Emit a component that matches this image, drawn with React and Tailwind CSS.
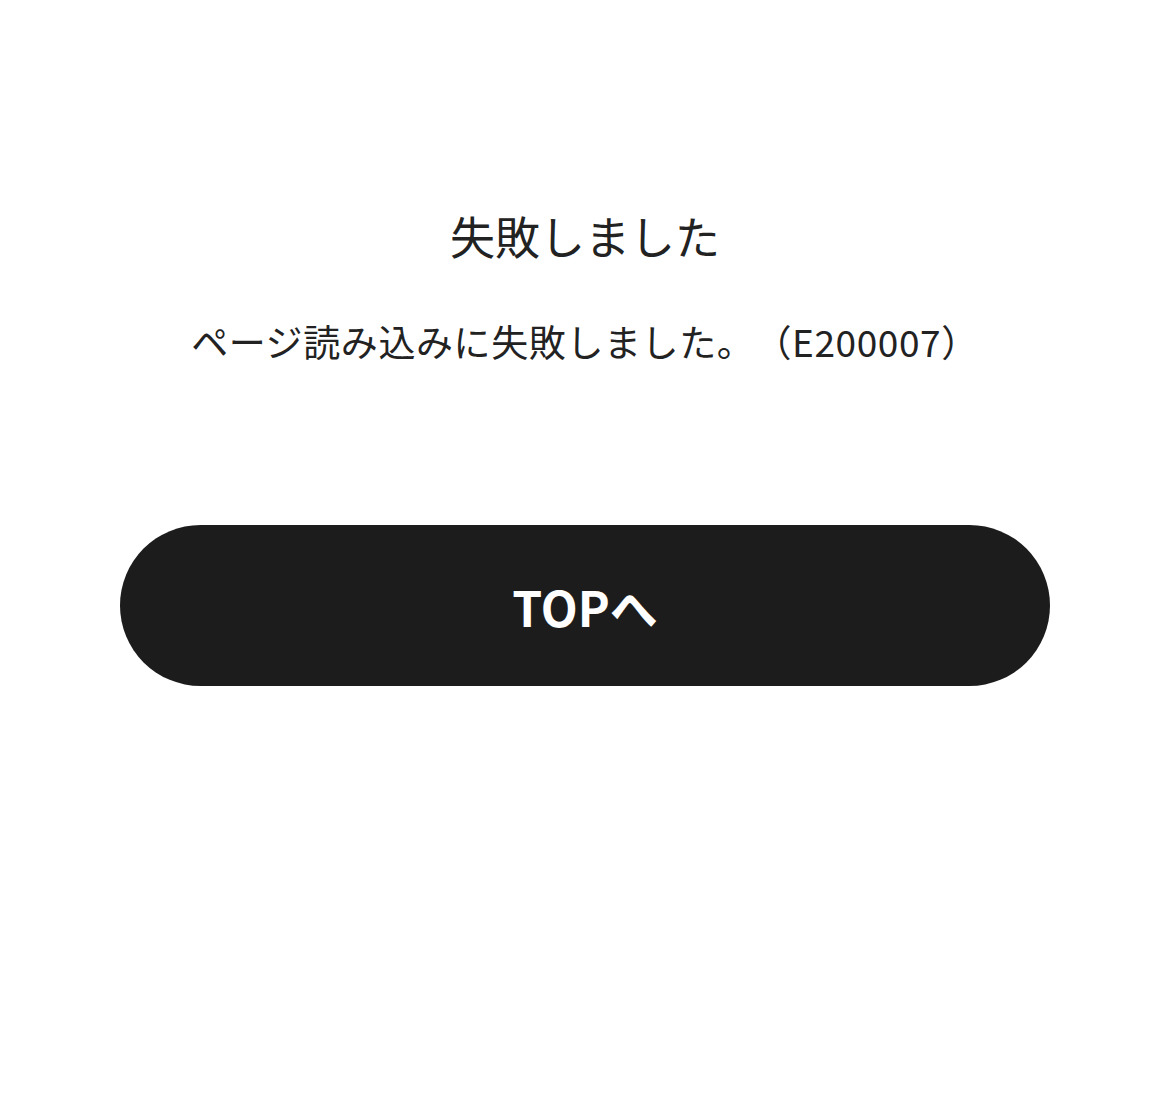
import React from 'react';

const App = () => {
  return (
    <div
      className="w-full min-h-[1093px] bg-white flex flex-col items-center pt-[204px] px-[120px]"
      style={{ fontFamily: '"Noto Sans CJK JP", "Noto Sans", sans-serif' }}
    >
      {/* Title */}
      <h1 className="text-[45px] leading-[64px] text-[#222222] font-normal">失敗しました</h1>

      {/* Message */}
      <p className="mt-[47px] text-[37px] leading-[52px] tracking-[0.6px] text-[#222222] [text-spacing-trim:space-all]">
        ページ読み込みに失敗しました。（E200007）
      </p>

      {/* Back to top */}
      <button className="mt-[158px] w-full h-[161px] rounded-full bg-[#1c1c1c] flex items-center justify-center">
        <span className="text-white text-[48px] font-bold leading-none">TOPへ</span>
      </button>
    </div>
  );
};

export default App;
